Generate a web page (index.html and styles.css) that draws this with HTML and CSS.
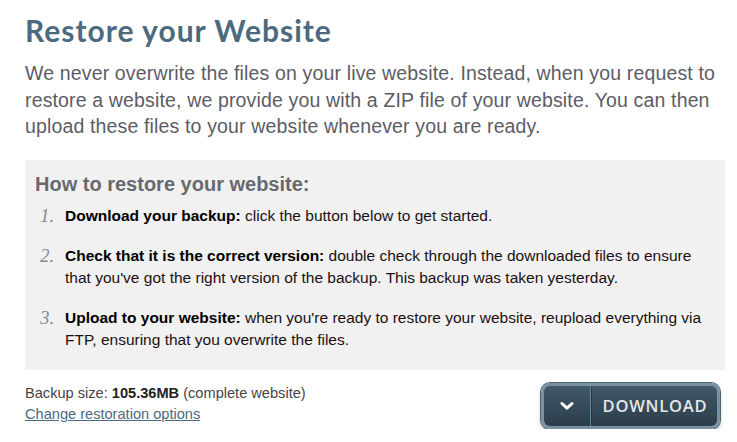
FILE: index.html
```html
<!DOCTYPE html>
<html>
<head>
<meta charset="utf-8">
<link rel="stylesheet" href="styles.css">
</head>
<body>
<div class="page">
  <h1 class="title">Restore your Website</h1>
  <p class="intro">We never overwrite the files on your live website. Instead, when you request to restore a website, we provide you with a ZIP file of your website. You can then upload these files to your website whenever you are ready.</p>
  <div class="howto">
    <h2 class="howto-title">How to restore your website:</h2>
    <ol class="steps">
      <li class="step"><span class="num">1.</span><span class="txt"><b>Download your backup:</b> click the button below to get started.</span></li>
      <li class="step"><span class="num">2.</span><span class="txt"><b>Check that it is the correct version:</b> double check through the downloaded files to ensure that you've got the right version of the backup. This backup was taken yesterday.</span></li>
      <li class="step"><span class="num">3.</span><span class="txt"><b>Upload to your website:</b> when you're ready to restore your website, reupload everything via FTP, ensuring that you overwrite the files.</span></li>
    </ol>
  </div>
  <div class="footer">
    <div class="info">
      <div class="size">Backup size: <b>105.36MB</b> (complete website)</div>
      <a class="change" href="#">Change restoration options</a>
    </div>
    <a class="btn" href="#">
      <span class="btn-icon"><svg width="14" height="10" viewBox="0 0 14 10"><path d="M2 2.5 L7 7.2 L12 2.5" fill="none" stroke="#ffffff" stroke-width="3" stroke-linecap="round" stroke-linejoin="round"/></svg></span>
      <span class="btn-label">DOWNLOAD</span>
    </a>
  </div>
</div>
</body>
</html>
```
FILE: styles.css
```css
html, body { margin: 0; padding: 0; background: #ffffff; }
.page { padding: 12px 12px 0 25px; width: 700px; }
.title {
  font-family: Lato, "Open Sans", sans-serif;
  font-weight: 700;
  font-size: 30px;
  line-height: 36px;
  letter-spacing: 1px;
  color: #4b6a80;
  margin: 0;
}
.intro {
  font-family: "Liberation Sans", Arial, sans-serif;
  font-size: 19.5px;
  letter-spacing: 0.15px;
  line-height: 26.5px;
  color: #5c5c66;
  margin: 12px 0 0 0;
}
.howto {
  background: #f1f1f1;
  margin-top: 20px;
  height: 210px;
  box-sizing: border-box;
  padding: 11px 10px 0 10px;
}
.howto-title {
  font-family: "Liberation Sans", Arial, sans-serif;
  font-weight: 700;
  font-size: 20px;
  line-height: 26px;
  color: #666a70;
  margin: 0;
}
.steps { list-style: none; margin: 8px 0 0 0; padding: 0; display: flex; flex-direction: column; gap: 18px; }
.step { display: flex; align-items: flex-start; }
.num {
  font-family: "Liberation Serif", "Times New Roman", serif;
  font-style: italic;
  font-size: 19px;
  color: #8a8a8a;
  width: 30px;
  flex: none;
  text-align: left;
  padding-left: 5px;
  box-sizing: border-box;
  line-height: 22px;
}
.txt {
  font-family: "Liberation Sans", Arial, sans-serif;
  font-size: 15.5px;
  line-height: 22px;
  color: #1a1010;
}
.txt b { color: #000; }
.footer { display: flex; justify-content: space-between; align-items: flex-start; margin-top: 13px; }
.info { font-family: "Liberation Sans", Arial, sans-serif; font-size: 14.6px; line-height: 21px; color: #444; }
.size b { color: #222; }
.change { color: #4b6a80; text-decoration: underline; }
.btn {
  display: flex;
  align-items: stretch;
  width: 179px;
  height: 46px;
  box-sizing: border-box;
  border: 3px solid #7991a0;
  border-radius: 9px;
  background: linear-gradient(#41596a, #2b3d49);
  box-shadow: 0 0 0 1px #4d6575, 0 3px 4px rgba(0,0,0,0.25);
  text-decoration: none;
  margin-right: 5px;
  overflow: hidden;
}
.btn-icon {
  width: 46px;
  display: flex;
  align-items: center;
  justify-content: center;
  border-right: 1px solid #5d8aa5;
  box-shadow: 1px 0 0 #223540;
}
.btn-label {
  flex: 1;
  display: flex;
  align-items: center;
  justify-content: center;
  font-family: "Open Sans", Lato, sans-serif;
  font-weight: 600;
  font-size: 16.5px;
  letter-spacing: 0.8px;
  color: #e3e7ea;
  padding-left: 2px;
}
```
